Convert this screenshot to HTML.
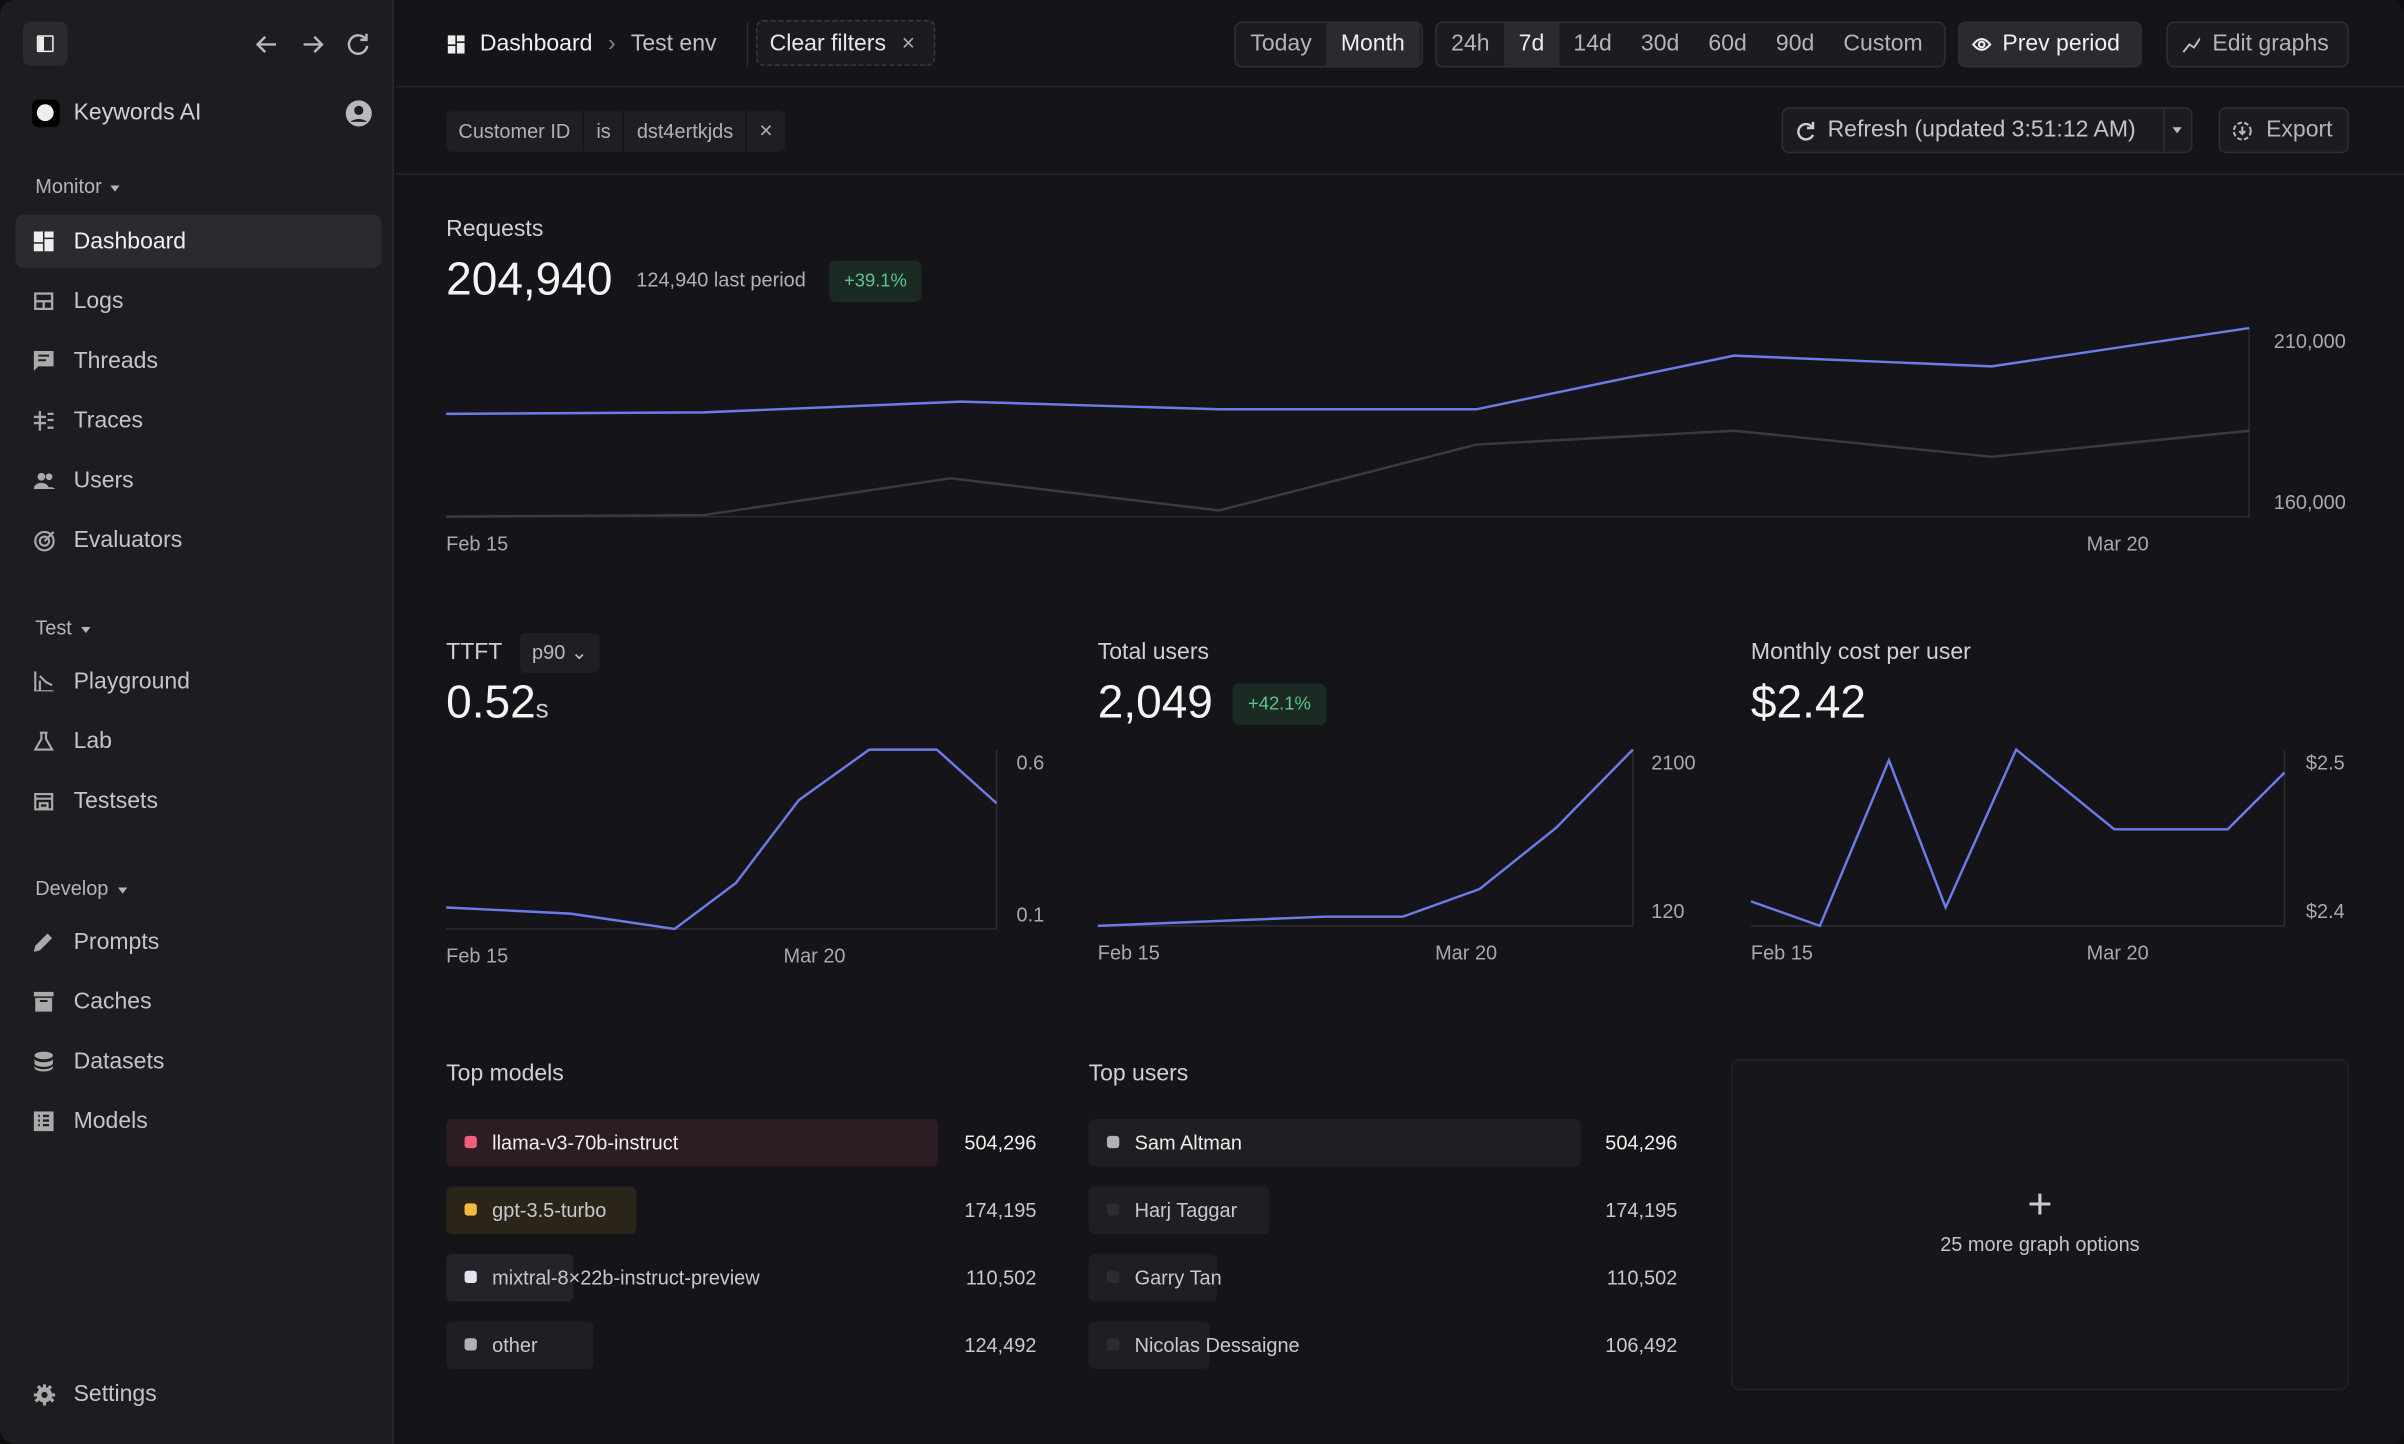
<!DOCTYPE html>
<html><head><meta charset="utf-8"><style>
*{margin:0;padding:0;box-sizing:border-box}
html,body{width:2404px;height:1444px;overflow:hidden;background:#0e0e10}
#w{position:absolute;left:0;top:0;width:1568px;height:942px;transform:scale(1.5332,1.5329);transform-origin:0 0;background:#151519;font-family:"Liberation Sans",sans-serif;color:#d4d4d8;border-radius:10px;overflow:hidden}
.a{position:absolute;white-space:nowrap}
#sb{position:absolute;left:0;top:0;width:257px;height:942px;background:#1d1d21;border-right:1px solid #2a2a2f}
.nav{position:absolute;left:10px;width:239px;height:35px;font-size:15px;color:#c4c4ca;line-height:35px;padding-left:38px;border-radius:6px}
.nav svg{position:absolute;left:12px;top:11px}
.sec{position:absolute;left:23px;font-size:13px;color:#b4b4ba}
.sec:after{content:"";display:inline-block;margin-left:6px;border:3.5px solid transparent;border-top:4px solid #b4b4ba;vertical-align:middle;margin-top:3px}
.btn{position:absolute;height:30px;border:1px solid #2e2e34;border-radius:5px;background:#1c1c20;font-size:15px;color:#b4b4ba;line-height:28px;white-space:nowrap}
.seg{display:inline-block;padding:0 9.5px;height:28px}
.on{background:#2a2a2f;color:#eee}
.lbl{font-size:15px;color:#d0d0d6}
.big{font-size:30px;color:#f4f4f5}
.ax{font-size:13px;color:#a8a8b0}
.pill{position:absolute;height:31px;border-radius:4px;font-size:13px;color:#c8c8ce;line-height:31px;padding-left:30px;white-space:nowrap}
.pill i{position:absolute;left:12px;top:11px;width:8px;height:8px;border-radius:2px}
.num{position:absolute;font-size:13px;color:#c8c8ce;text-align:right;width:80px}
</style></head><body><div id="w">
<div id="sb">
 <div class="a" style="left:15px;top:14px;width:29px;height:29px;background:#2a2a2f;border-radius:5px"><div style="position:absolute;left:9px;top:9px;width:11px;height:11px;border:1.5px solid #eee;border-radius:1px;background:linear-gradient(90deg,#eee 40%,transparent 40%)"></div></div>
 <svg class="a" style="left:164px;top:20px" width="82" height="18" fill="none" stroke="#b8b8be" stroke-width="1.6"><path d="M16 9H4M9 4L4 9l5 5"/><path d="M34 9h12M41 4l5 5-5 5"/><path d="M74 5a6 6 0 1 0 1.5 5"/><path d="M75 2v4h-4"/></svg>
 <div class="a" style="left:21px;top:65px;width:18px;height:18px;background:#000;border-radius:4px"><div style="position:absolute;left:3px;top:3px;width:11px;height:11px;border-radius:50%;background:#eee"></div></div>
 <div class="a" style="left:48px;top:65px;font-size:15px;color:#d0d0d6">Keywords AI</div>
 <svg class="a" style="left:225px;top:65px" width="18" height="18"><circle cx="9" cy="9" r="8.5" fill="#b8b8be"/><circle cx="9" cy="7" r="3" fill="#1d1d21"/><path d="M3.5 14.5a7 5 0 0 1 11 0" fill="#1d1d21"/></svg>
 <div class="sec" style="top:114px">Monitor</div>
 <div class="nav" style="top:140px;background:#2a2a2f;color:#f0f0f2"><svg width="13" height="13" fill="#eee"><rect x="0" y="0" width="6" height="7"/><rect x="7" y="0" width="6" height="4"/><rect x="0" y="8" width="6" height="5"/><rect x="7" y="5" width="6" height="8"/></svg>Dashboard</div>
 <div class="nav" style="top:179px"><svg width="13" height="13" fill="none" stroke="#aaa" stroke-width="1.5"><rect x="1" y="1.5" width="11" height="10"/><path d="M1 6.5h11M6.5 6.5v5"/></svg>Logs</div>
 <div class="nav" style="top:218px"><svg width="13" height="13" fill="#aaa"><path d="M0 0h13v10H3l-3 3z"/><path d="M3 3h7M3 6h5" stroke="#1d1d21" stroke-width="1.3"/></svg>Threads</div>
 <div class="nav" style="top:257px"><svg width="13" height="13" stroke="#aaa" stroke-width="1.5"><path d="M4 0v13M0 4h8M0 8h8M9 2h4M9 6h4M9 11h4"/></svg>Traces</div>
 <div class="nav" style="top:296px"><svg width="14" height="13" fill="#aaa"><circle cx="5" cy="4" r="2.5"/><circle cx="10" cy="4" r="2.2"/><path d="M0 12a5 4 0 0 1 10 0zM8 12a4 3.5 0 0 1 6 0z"/></svg>Users</div>
 <div class="nav" style="top:335px"><svg width="14" height="14" fill="none" stroke="#aaa" stroke-width="1.4"><circle cx="7" cy="7" r="6"/><circle cx="7" cy="7" r="3"/><path d="M7 7l6-6"/></svg>Evaluators</div>
 <div class="sec" style="top:402px">Test</div>
 <div class="nav" style="top:427px"><svg width="13" height="13" fill="none" stroke="#aaa" stroke-width="1.4"><path d="M1 0v13h12M4 3l4 4 4 2M4 6v7"/></svg>Playground</div>
 <div class="nav" style="top:466px"><svg width="13" height="13" fill="none" stroke="#aaa" stroke-width="1.4"><path d="M4 1h5M5 1v4L1 12h11L8 5V1"/></svg>Lab</div>
 <div class="nav" style="top:505px"><svg width="13" height="13" fill="none" stroke="#aaa" stroke-width="1.4"><rect x="1" y="2" width="11" height="10"/><path d="M1 5h11M4 8h5v3H4z"/></svg>Testsets</div>
 <div class="sec" style="top:572px">Develop</div>
 <div class="nav" style="top:597px"><svg width="13" height="13" fill="#aaa"><path d="M0 13l1-4 8-8 3 3-8 8z"/></svg>Prompts</div>
 <div class="nav" style="top:636px"><svg width="13" height="13" fill="#aaa"><rect x="0" y="0" width="13" height="3"/><path d="M1 4h11v9H1z"/><path d="M4 6h5" stroke="#1d1d21" stroke-width="1.3"/></svg>Caches</div>
 <div class="nav" style="top:675px"><svg width="13" height="13" fill="#aaa"><ellipse cx="6.5" cy="2.5" rx="6" ry="2.5"/><path d="M0.5 4.5a6 2.5 0 0 0 12 0v3a6 2.5 0 0 1-12 0zM0.5 9a6 2.5 0 0 0 12 0v1.5a6 2.5 0 0 1-12 0z"/></svg>Datasets</div>
 <div class="nav" style="top:714px"><svg width="13" height="13" fill="#aaa"><path d="M0 0h13v13H0z"/><path d="M3 3h1M3 6h1M3 9h1M6 3h4M6 6h4M6 9h4" stroke="#1d1d21" stroke-width="1.5"/></svg>Models</div>
 <div class="nav" style="top:892px"><svg width="14" height="14" fill="#aaa"><circle cx="7" cy="7" r="5"/><path d="M6 0h2v14H6zM0 6h14v2H0zM2 2l1.5-1.5 10 10L12 12zM12 2l-10 10-1.5-1.5 10-10z"/><circle cx="7" cy="7" r="2" fill="#1d1d21"/></svg>Settings</div>
</div>

<div class="a" style="left:258px;top:56px;width:1310px;height:1px;background:#242429"></div>
<div class="a" style="left:258px;top:113px;width:1310px;height:1px;background:#242429"></div>
<svg class="a" style="left:292px;top:23px" width="12" height="12" fill="#eee"><rect x="0" y="0" width="5" height="6"/><rect x="6" y="0" width="5" height="4"/><rect x="0" y="7" width="5" height="5"/><rect x="6" y="5" width="5" height="7"/></svg>
<div class="a" style="left:313px;top:20px;font-size:15px;color:#f0f0f2">Dashboard <span style="color:#888;margin:0 6px">›</span> <span style="color:#c0c0c6">Test env</span></div>
<div class="a" style="left:487px;top:14px;width:1px;height:30px;background:#2a2a2f"></div>
<div class="btn" style="left:493px;top:13px;width:117px;border:1px dashed #3a3a40;color:#e8e8ea;padding-left:8px;line-height:29px">Clear filters <span style="margin-left:6px;color:#aaa">×</span></div>
<div class="btn" style="left:805px;top:14px;width:123px;padding-left:0"><span class="seg">Today</span><span class="seg on">Month</span></div>
<div class="btn" style="left:936px;top:14px;width:333px"><span class="seg">24h</span><span class="seg on">7d</span><span class="seg">14d</span><span class="seg">30d</span><span class="seg">60d</span><span class="seg">90d</span><span class="seg">Custom</span></div>
<div class="btn" style="left:1277px;top:14px;width:120px;background:#2a2a2f;color:#f0f0f2;padding-left:28px"><svg class="a" style="left:8px;top:8px" width="13" height="12" fill="none" stroke="#eee" stroke-width="1.4"><path d="M1 6q5.5-7 11 0q-5.5 7-11 0z"/><circle cx="6.5" cy="6" r="1.8"/></svg>Prev period</div>
<div class="btn" style="left:1413px;top:14px;width:119px;padding-left:29px"><svg class="a" style="left:9px;top:9px" width="12" height="11" fill="none" stroke="#bbb" stroke-width="1.3"><path d="M1 10l4-5 3 2 4-6"/></svg>Edit graphs</div>

<div class="a" style="left:291px;top:72px;height:27px;background:#1f1f23;border-radius:4px;font-size:13px;color:#b0b0b6;line-height:27px;display:flex">
<span style="padding:0 8px;border-right:1px solid #151519">Customer ID</span><span style="padding:0 8px;border-right:1px solid #151519">is</span><span style="padding:0 8px;border-right:1px solid #151519">dst4ertkjds</span><span style="padding:0 8px;font-size:15px">×</span></div>
<div class="btn" style="left:1162px;top:70px;width:268px;padding-left:29px;color:#c4c4ca"><svg class="a" style="left:8px;top:8px" width="13" height="13" fill="none" stroke="#ccc" stroke-width="1.6"><path d="M11 4a5 5 0 1 0 .5 5"/><path d="M11.5 0.5v4h-4"/></svg>Refresh (updated 3:51:12 AM)<span style="position:absolute;left:248px;top:0;width:1px;height:28px;background:#2e2e34"></span><span style="position:absolute;left:254px;top:12px;border:3.5px solid transparent;border-top:4px solid #bbb"></span></div>
<div class="btn" style="left:1447px;top:70px;width:85px;padding-left:30px"><svg class="a" style="left:8px;top:8px" width="13" height="13" fill="none" stroke="#bbb" stroke-width="1.3"><circle cx="6.5" cy="6.5" r="5.5" stroke-dasharray="3 1.5"/><path d="M6.5 3.5v5M4.5 6.5l2 2 2-2"/></svg>Export</div>

<div class="a lbl" style="left:291px;top:141px">Requests</div>
<div class="a big" style="left:291px;top:166px">204,940</div>
<div class="a" style="left:415px;top:175px;font-size:13px;color:#b0b0b6">124,940 last period</div>
<div class="a" style="left:541px;top:170px;width:60px;height:27px;background:#1b2a23;border-radius:4px;font-size:12px;color:#5ec48c;text-align:center;line-height:27px">+39.1%</div>
<div class="a ax" style="left:1483px;top:215px">210,000</div>
<div class="a ax" style="left:1483px;top:320px">160,000</div>
<div class="a ax" style="left:291px;top:347px">Feb 15</div>
<div class="a ax" style="left:1361px;top:347px">Mar 20</div>

<div class="a lbl" style="left:291px;top:417px">TTFT</div>
<div class="a" style="left:339px;top:413px;width:52px;height:26px;background:#1f1f23;border-radius:4px;font-size:13px;color:#bbb;line-height:26px;padding-left:8px">p90 ⌄</div>
<div class="a big" style="left:291px;top:442px">0.52<span style="font-size:17px;color:#ccc">s</span></div>
<div class="a ax" style="left:663px;top:490px">0.6</div>
<div class="a ax" style="left:663px;top:589px">0.1</div>
<div class="a ax" style="left:291px;top:616px">Feb 15</div>
<div class="a ax" style="left:511px;top:616px">Mar 20</div>

<div class="a lbl" style="left:716px;top:417px">Total users</div>
<div class="a big" style="left:716px;top:442px">2,049</div>
<div class="a" style="left:804px;top:446px;width:61px;height:27px;background:#1b2a23;border-radius:4px;font-size:12px;color:#5ec48c;text-align:center;line-height:27px">+42.1%</div>
<div class="a ax" style="left:1077px;top:490px">2100</div>
<div class="a ax" style="left:1077px;top:587px">120</div>
<div class="a ax" style="left:716px;top:614px">Feb 15</div>
<div class="a ax" style="left:936px;top:614px">Mar 20</div>

<div class="a lbl" style="left:1142px;top:417px">Monthly cost per user</div>
<div class="a big" style="left:1142px;top:442px">$2.42</div>
<div class="a ax" style="left:1504px;top:490px">$2.5</div>
<div class="a ax" style="left:1504px;top:587px">$2.4</div>
<div class="a ax" style="left:1142px;top:614px">Feb 15</div>
<div class="a ax" style="left:1361px;top:614px">Mar 20</div>

<svg class="a" style="left:0;top:0" width="1568" height="942" fill="none" stroke-width="1.6">
<g stroke="#2c2c31" stroke-width="1"><path d="M291 337H1467V214"/><path d="M291 606H650V489"/><path d="M716 604H1065V489"/><path d="M1142 604H1490V489"/></g>
<path d="M291 337L459 336L620 312L795 333L963 290L1131 281L1299 298L1467 281" stroke="#3a3a40"/>
<g stroke="#6b7ce8"><path d="M291 270L459 269L627 262L795 267L963 267L1131 232L1299 239L1467 214"/>
<path d="M291 592L372 596L440 606L480 576L521 522L567 489L611 489L650 524"/>
<path d="M716 604L790 601L864 598L915 598L965 580L1015 540L1065 489"/>
<path d="M1142 588L1187 604L1232 496L1269 592L1315 489L1379 541L1453 541L1490 504"/></g>
</svg>

<div class="a lbl" style="left:291px;top:692px">Top models</div>
<div class="pill" style="left:291px;top:730px;width:321px;background:#2c1c23;color:#eee"><i style="background:#f0607a"></i>llama-v3-70b-instruct</div>
<div class="pill" style="left:291px;top:774px;width:124px;background:#2a2419"><i style="background:#f5b942"></i>gpt-3.5-turbo</div>
<div class="pill" style="left:291px;top:818px;width:83px;background:#232329"><i style="background:#e4e2ec"></i>mixtral-8×22b-instruct-preview</div>
<div class="pill" style="left:291px;top:862px;width:96px;background:#1f1f23"><i style="background:#b0b0b8"></i>other</div>
<div class="num" style="left:596px;top:738px;color:#eee">504,296</div>
<div class="num" style="left:596px;top:782px">174,195</div>
<div class="num" style="left:596px;top:826px">110,502</div>
<div class="num" style="left:596px;top:870px">124,492</div>

<div class="a lbl" style="left:710px;top:692px">Top users</div>
<div class="pill" style="left:710px;top:730px;width:321px;background:#1f1f23;color:#eee"><i style="background:#b0b0b8"></i>Sam Altman</div>
<div class="pill" style="left:710px;top:774px;width:118px;background:#1f1f23"><i style="background:#2c2c31"></i>Harj Taggar</div>
<div class="pill" style="left:710px;top:818px;width:84px;background:#1f1f23"><i style="background:#2c2c31"></i>Garry Tan</div>
<div class="pill" style="left:710px;top:862px;width:79px;background:#1f1f23"><i style="background:#2c2c31"></i>Nicolas Dessaigne</div>
<div class="num" style="left:1014px;top:738px;color:#eee">504,296</div>
<div class="num" style="left:1014px;top:782px">174,195</div>
<div class="num" style="left:1014px;top:826px">110,502</div>
<div class="num" style="left:1014px;top:870px">106,492</div>

<div class="a" style="left:1129px;top:691px;width:403px;height:216px;border:1px solid #222227;border-radius:6px;background:#17171b">
<div style="position:absolute;left:0;width:100%;top:78px;text-align:center;font-size:28px;color:#ccc;font-weight:300">+</div>
<div style="position:absolute;left:0;width:100%;top:112px;text-align:center;font-size:13px;color:#c4c4ca">25 more graph options</div></div>
</div></body></html>
